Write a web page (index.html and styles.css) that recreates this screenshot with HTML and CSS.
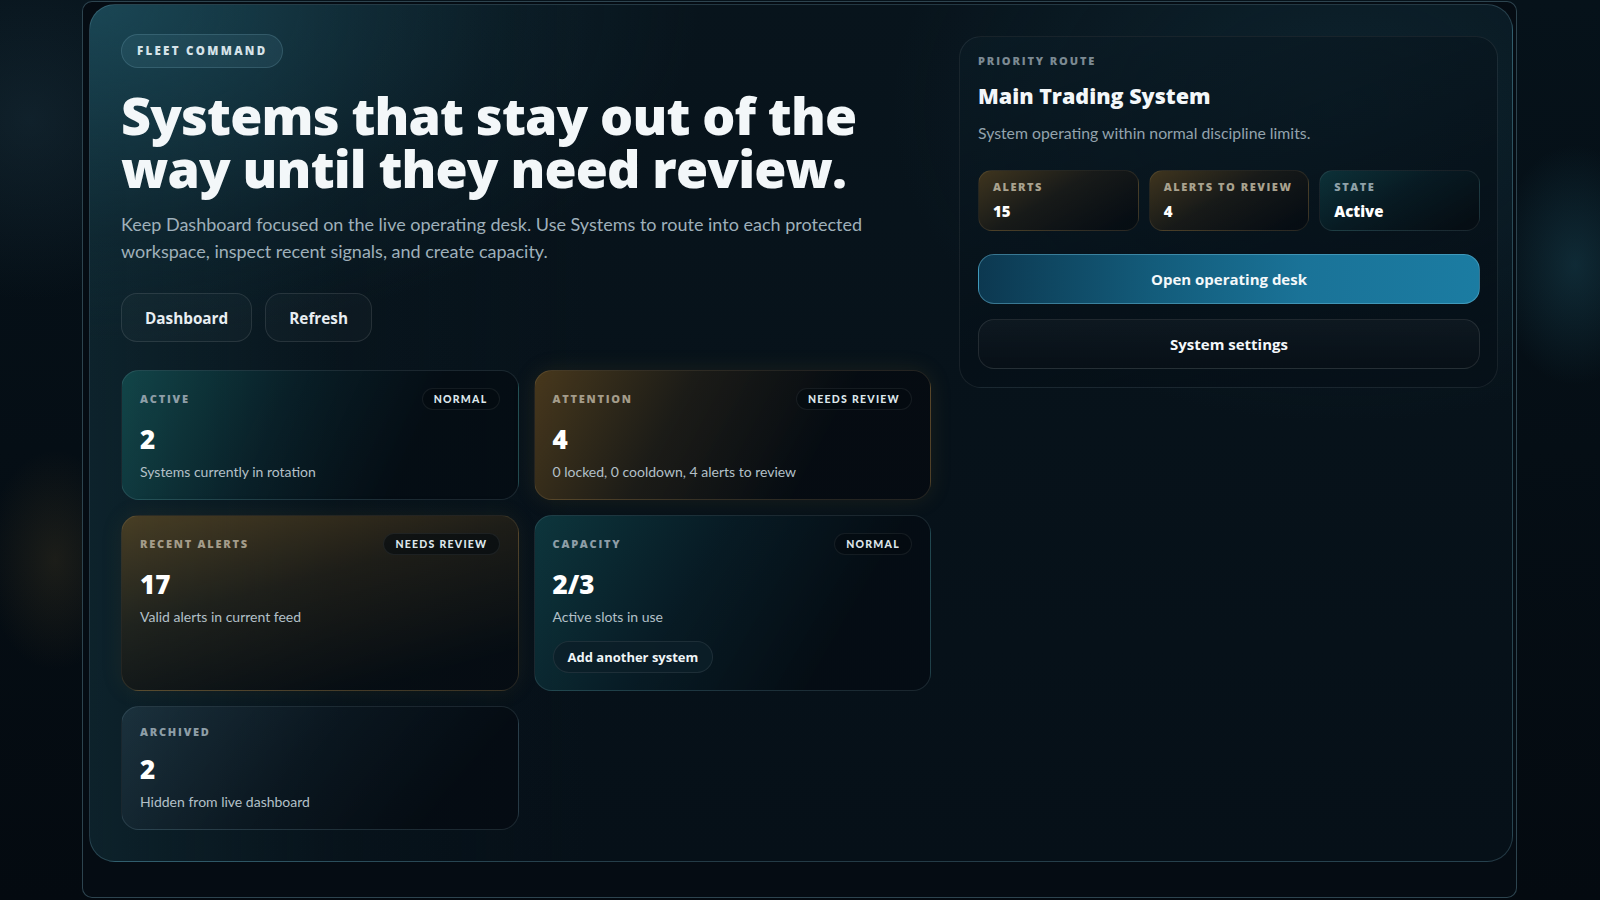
FILE: index.html
```html
<!DOCTYPE html>
<html lang="en">
<head>
<meta charset="utf-8">
<title>Fleet Command</title>
<link rel="stylesheet" href="styles.css">
</head>
<body>
<div class="shell">
  <section class="hero">
    <div class="main">
      <span class="eyebrow">Fleet command</span>
      <h1 class="title">Systems that stay out of the<br>way until they need review.</h1>
      <p class="lede">Keep Dashboard focused on the live operating desk. Use Systems to route into each protected<br>workspace, inspect recent signals, and create capacity.</p>
      <div class="actions">
        <button class="btn">Dashboard</button>
        <button class="btn">Refresh</button>
      </div>
      <div class="cards">
        <article class="card card-teal">
          <div class="card-head"><span class="label">Active</span><span class="badge">Normal</span></div>
          <div class="value">2</div>
          <div class="desc">Systems currently in rotation</div>
        </article>
        <article class="card card-amber card-glow">
          <div class="card-head"><span class="label label-warm">Attention</span><span class="badge">Needs review</span></div>
          <div class="value">4</div>
          <div class="desc">0 locked, 0 cooldown, 4 alerts to review</div>
        </article>
        <article class="card card-amber-tall">
          <div class="card-head"><span class="label label-warm">Recent alerts</span><span class="badge">Needs review</span></div>
          <div class="value">17</div>
          <div class="desc">Valid alerts in current feed</div>
        </article>
        <article class="card card-teal2">
          <div class="card-head"><span class="label">Capacity</span><span class="badge">Normal</span></div>
          <div class="value">2/3</div>
          <div class="desc">Active slots in use</div>
          <button class="cap-btn">Add another system</button>
        </article>
        <article class="card card-slate">
          <div class="card-head"><span class="label">Archived</span></div>
          <div class="value">2</div>
          <div class="desc">Hidden from live dashboard</div>
        </article>
      </div>
    </div>
    <aside class="route">
      <div class="route-label">Priority route</div>
      <h2 class="route-title">Main Trading System</h2>
      <p class="route-desc">System operating within normal discipline limits.</p>
      <div class="tiles">
        <div class="tile tile-amber"><div class="tile-label">Alerts</div><div class="tile-value">15</div></div>
        <div class="tile tile-amber"><div class="tile-label">Alerts to review</div><div class="tile-value">4</div></div>
        <div class="tile tile-teal"><div class="tile-label tile-label-cool">State</div><div class="tile-value">Active</div></div>
      </div>
      <button class="route-btn route-btn-primary">Open operating desk</button>
      <button class="route-btn route-btn-secondary">System settings</button>
    </aside>
  </section>
</div>
</body>
</html>
```

FILE: styles.css
```css
* { box-sizing: border-box; }

html, body {
  margin: 0;
  height: 900px;
  overflow: hidden;
}

body {
  font-family: "Lato", "Open Sans", sans-serif;
  color: #e9eff2;
  background:
    radial-gradient(ellipse 70px 110px at 55px 560px, rgba(110, 86, 42, 0.22), transparent 100%),
    radial-gradient(ellipse 80px 120px at 1575px 265px, rgba(38, 104, 124, 0.3), transparent 100%),
    radial-gradient(circle at 30px 120px, rgba(40, 70, 85, 0.3), transparent 180px),
    linear-gradient(180deg, #06121a 0%, #040a10 100%);
}

.shell {
  margin: 1px 0 0 82px;
  width: 1435px;
  height: 897px;
  border: 1px solid rgba(110, 160, 180, 0.38);
  border-radius: 10px;
  padding: 2px 3px 0 6px;
  background: #050c13;
}

.hero {
  height: 858px;
  border: 1px solid rgba(120, 175, 195, 0.26);
  border-radius: 26px;
  padding: 29px 14px 0 31px;
  display: grid;
  grid-template-columns: 810px 539px;
  column-gap: 28px;
  align-items: start;
  background:
    radial-gradient(ellipse 760px 420px at 0% 0%, rgba(30, 82, 98, 0.75), rgba(20, 55, 68, 0.25) 55%, transparent 80%),
    radial-gradient(ellipse 600px 420px at 88% 12%, rgba(22, 62, 78, 0.35), transparent 75%),
    linear-gradient(90deg, rgba(18, 48, 58, 0.55) 0%, rgba(10, 28, 36, 0.2) 18%, transparent 35%),
    linear-gradient(180deg, #08141c 0%, #061018 100%);
}

/* ---------- left column ---------- */
.eyebrow {
  display: inline-block;
  height: 34px;
  line-height: 32px;
  padding: 0 15px;
  border: 1px solid rgba(150, 200, 220, 0.18);
  border-radius: 17px;
  background: rgba(90, 150, 170, 0.14);
  font-family: "Open Sans", "Lato", sans-serif;
  font-size: 11.5px;
  font-weight: 800;
  letter-spacing: 0.2em;
  text-transform: uppercase;
  color: #d6e3e9;
}

.title {
  margin: 20px 0 0;
  font-family: "Open Sans", "Lato", sans-serif;
  font-size: 52px;
  line-height: 53px;
  font-weight: 800;
  letter-spacing: -0.016em;
  color: #f3f7f9;
}

.lede {
  margin: 17px 0 0;
  font-size: 18px;
  line-height: 26.5px;
  color: #9fb0ba;
}

.actions {
  margin-top: 29px;
  display: flex;
  gap: 13px;
}

.btn {
  height: 49px;
  padding: 0 23px;
  border-radius: 16px;
  border: 1px solid rgba(255, 255, 255, 0.1);
  background: rgba(255, 255, 255, 0.025);
  color: #e8eef2;
  font-family: "Open Sans", "Lato", sans-serif;
  font-size: 15.3px;
  font-weight: 700;
}

.cards {
  margin-top: 28px;
  display: grid;
  grid-template-columns: 1fr 1fr;
  gap: 15px;
}

.card {
  border: 1px solid rgba(140, 180, 195, 0.16);
  border-radius: 18px;
  padding: 17px 18px 17px;
}

.card-teal {
  background: linear-gradient(115deg, rgba(22, 92, 92, 0.62) 0%, rgba(10, 38, 46, 0.6) 38%, rgba(5, 13, 20, 0.95) 72%);
}

.card-teal2 {
  background: linear-gradient(120deg, rgba(18, 78, 84, 0.6) 0%, rgba(9, 34, 44, 0.6) 40%, rgba(5, 13, 20, 0.95) 75%);
}

.card-amber {
  background: linear-gradient(118deg, rgba(112, 80, 30, 0.62) 0%, rgba(42, 34, 22, 0.6) 35%, rgba(6, 12, 18, 0.95) 70%);
  border-color: rgba(190, 160, 110, 0.16);
}

.card-glow {
  box-shadow: 0 0 22px rgba(150, 110, 40, 0.14);
}

.card-amber-tall {
  background: linear-gradient(165deg, rgba(112, 82, 34, 0.6) 0%, rgba(48, 38, 22, 0.55) 40%, rgba(6, 13, 19, 0.95) 85%);
  border-color: rgba(190, 160, 110, 0.16);
  box-shadow: 0 0 22px rgba(150, 110, 40, 0.1);
}

.card-slate {
  background: linear-gradient(130deg, rgba(40, 64, 78, 0.55) 0%, rgba(12, 24, 33, 0.75) 45%, rgba(5, 12, 19, 0.95) 80%);
}

.card-head {
  display: flex;
  justify-content: space-between;
  align-items: center;
  min-height: 16px;
}

.label {
  font-family: "Open Sans", "Lato", sans-serif;
  font-size: 11px;
  line-height: 16px;
  font-weight: 800;
  letter-spacing: 0.16em;
  text-transform: uppercase;
  color: #8e9ea7;
}

.label-warm {
  color: #a49c8a;
}

.badge {
  height: 22px;
  line-height: 20px;
  padding: 0 11px;
  border: 1px solid rgba(255, 255, 255, 0.07);
  border-radius: 11px;
  background: rgba(3, 10, 15, 0.6);
  font-size: 10.5px;
  font-weight: 900;
  letter-spacing: 0.12em;
  text-transform: uppercase;
  color: #dde6eb;
}

.value {
  margin-top: 13px;
  font-family: "Open Sans", "Lato", sans-serif;
  font-size: 26px;
  line-height: 32px;
  font-weight: 800;
  color: #ffffff;
}

.desc {
  margin-top: 7px;
  font-size: 14px;
  line-height: 20px;
  color: #b3c0c8;
}

.cap-btn {
  margin-top: 14px;
  height: 32px;
  padding: 0 14px;
  border-radius: 16px;
  border: 1px solid rgba(255, 255, 255, 0.08);
  background: rgba(12, 30, 40, 0.85);
  color: #f0f5f7;
  font-family: "Open Sans", "Lato", sans-serif;
  font-size: 13px;
  font-weight: 700;
}

/* ---------- right column ---------- */
.route {
  margin-top: 2px;
  border: 1px solid rgba(255, 255, 255, 0.075);
  border-radius: 22px;
  padding: 17px 17px 18px 18px;
  background: linear-gradient(160deg, rgba(12, 30, 40, 0.55) 0%, rgba(6, 16, 24, 0.75) 60%, rgba(6, 16, 24, 0.85) 100%);
}

.route-label {
  font-family: "Open Sans", "Lato", sans-serif;
  font-size: 11px;
  line-height: 14px;
  font-weight: 800;
  letter-spacing: 0.17em;
  text-transform: uppercase;
  color: #7c8a93;
}

.route-title {
  margin: 14px 0 0;
  font-family: "Open Sans", "Lato", sans-serif;
  font-size: 21.5px;
  line-height: 28px;
  font-weight: 800;
  letter-spacing: 0;
  color: #f3f7f9;
}

.route-desc {
  margin: 12px 0 0;
  font-size: 15.8px;
  line-height: 22px;
  color: #93a3ad;
}

.tiles {
  margin-top: 26px;
  display: grid;
  grid-template-columns: 1fr 1fr 1fr;
  gap: 10px;
}

.tile {
  height: 61px;
  border: 1px solid rgba(255, 255, 255, 0.08);
  border-radius: 14px;
  padding: 9px 14px 0;
}

.tile-amber {
  background: linear-gradient(150deg, rgba(100, 74, 30, 0.6) 0%, rgba(35, 30, 22, 0.6) 45%, rgba(7, 13, 19, 0.9) 90%);
  border-color: rgba(190, 160, 110, 0.14);
}

.tile-teal {
  background: linear-gradient(150deg, rgba(16, 68, 74, 0.6) 0%, rgba(9, 32, 40, 0.6) 45%, rgba(6, 14, 20, 0.9) 90%);
}

.tile-label {
  font-family: "Open Sans", "Lato", sans-serif;
  font-size: 11px;
  line-height: 14px;
  font-weight: 800;
  letter-spacing: 0.14em;
  text-transform: uppercase;
  color: #a9a28f;
  white-space: nowrap;
}

.tile-label-cool {
  color: #8fa1a8;
}

.tile-value {
  margin-top: 6px;
  font-family: "Open Sans", "Lato", sans-serif;
  font-size: 15px;
  line-height: 22px;
  font-weight: 800;
  color: #ffffff;
}

.route-btn {
  display: block;
  width: 100%;
  height: 50px;
  border-radius: 16px;
  font-family: "Open Sans", "Lato", sans-serif;
  font-size: 15px;
  font-weight: 700;
  color: #f4f8fa;
}

.route-btn-primary {
  margin-top: 23px;
  border: 1px solid rgba(110, 190, 220, 0.45);
  background: linear-gradient(90deg, #0c3850 0%, #135c7b 35%, #1a7398 65%, #1b7ca2 100%);
}

.route-btn-secondary {
  margin-top: 15px;
  border: 1px solid rgba(255, 255, 255, 0.1);
  background: linear-gradient(180deg, rgba(20, 30, 38, 0.6), rgba(8, 16, 23, 0.8));
}
```
